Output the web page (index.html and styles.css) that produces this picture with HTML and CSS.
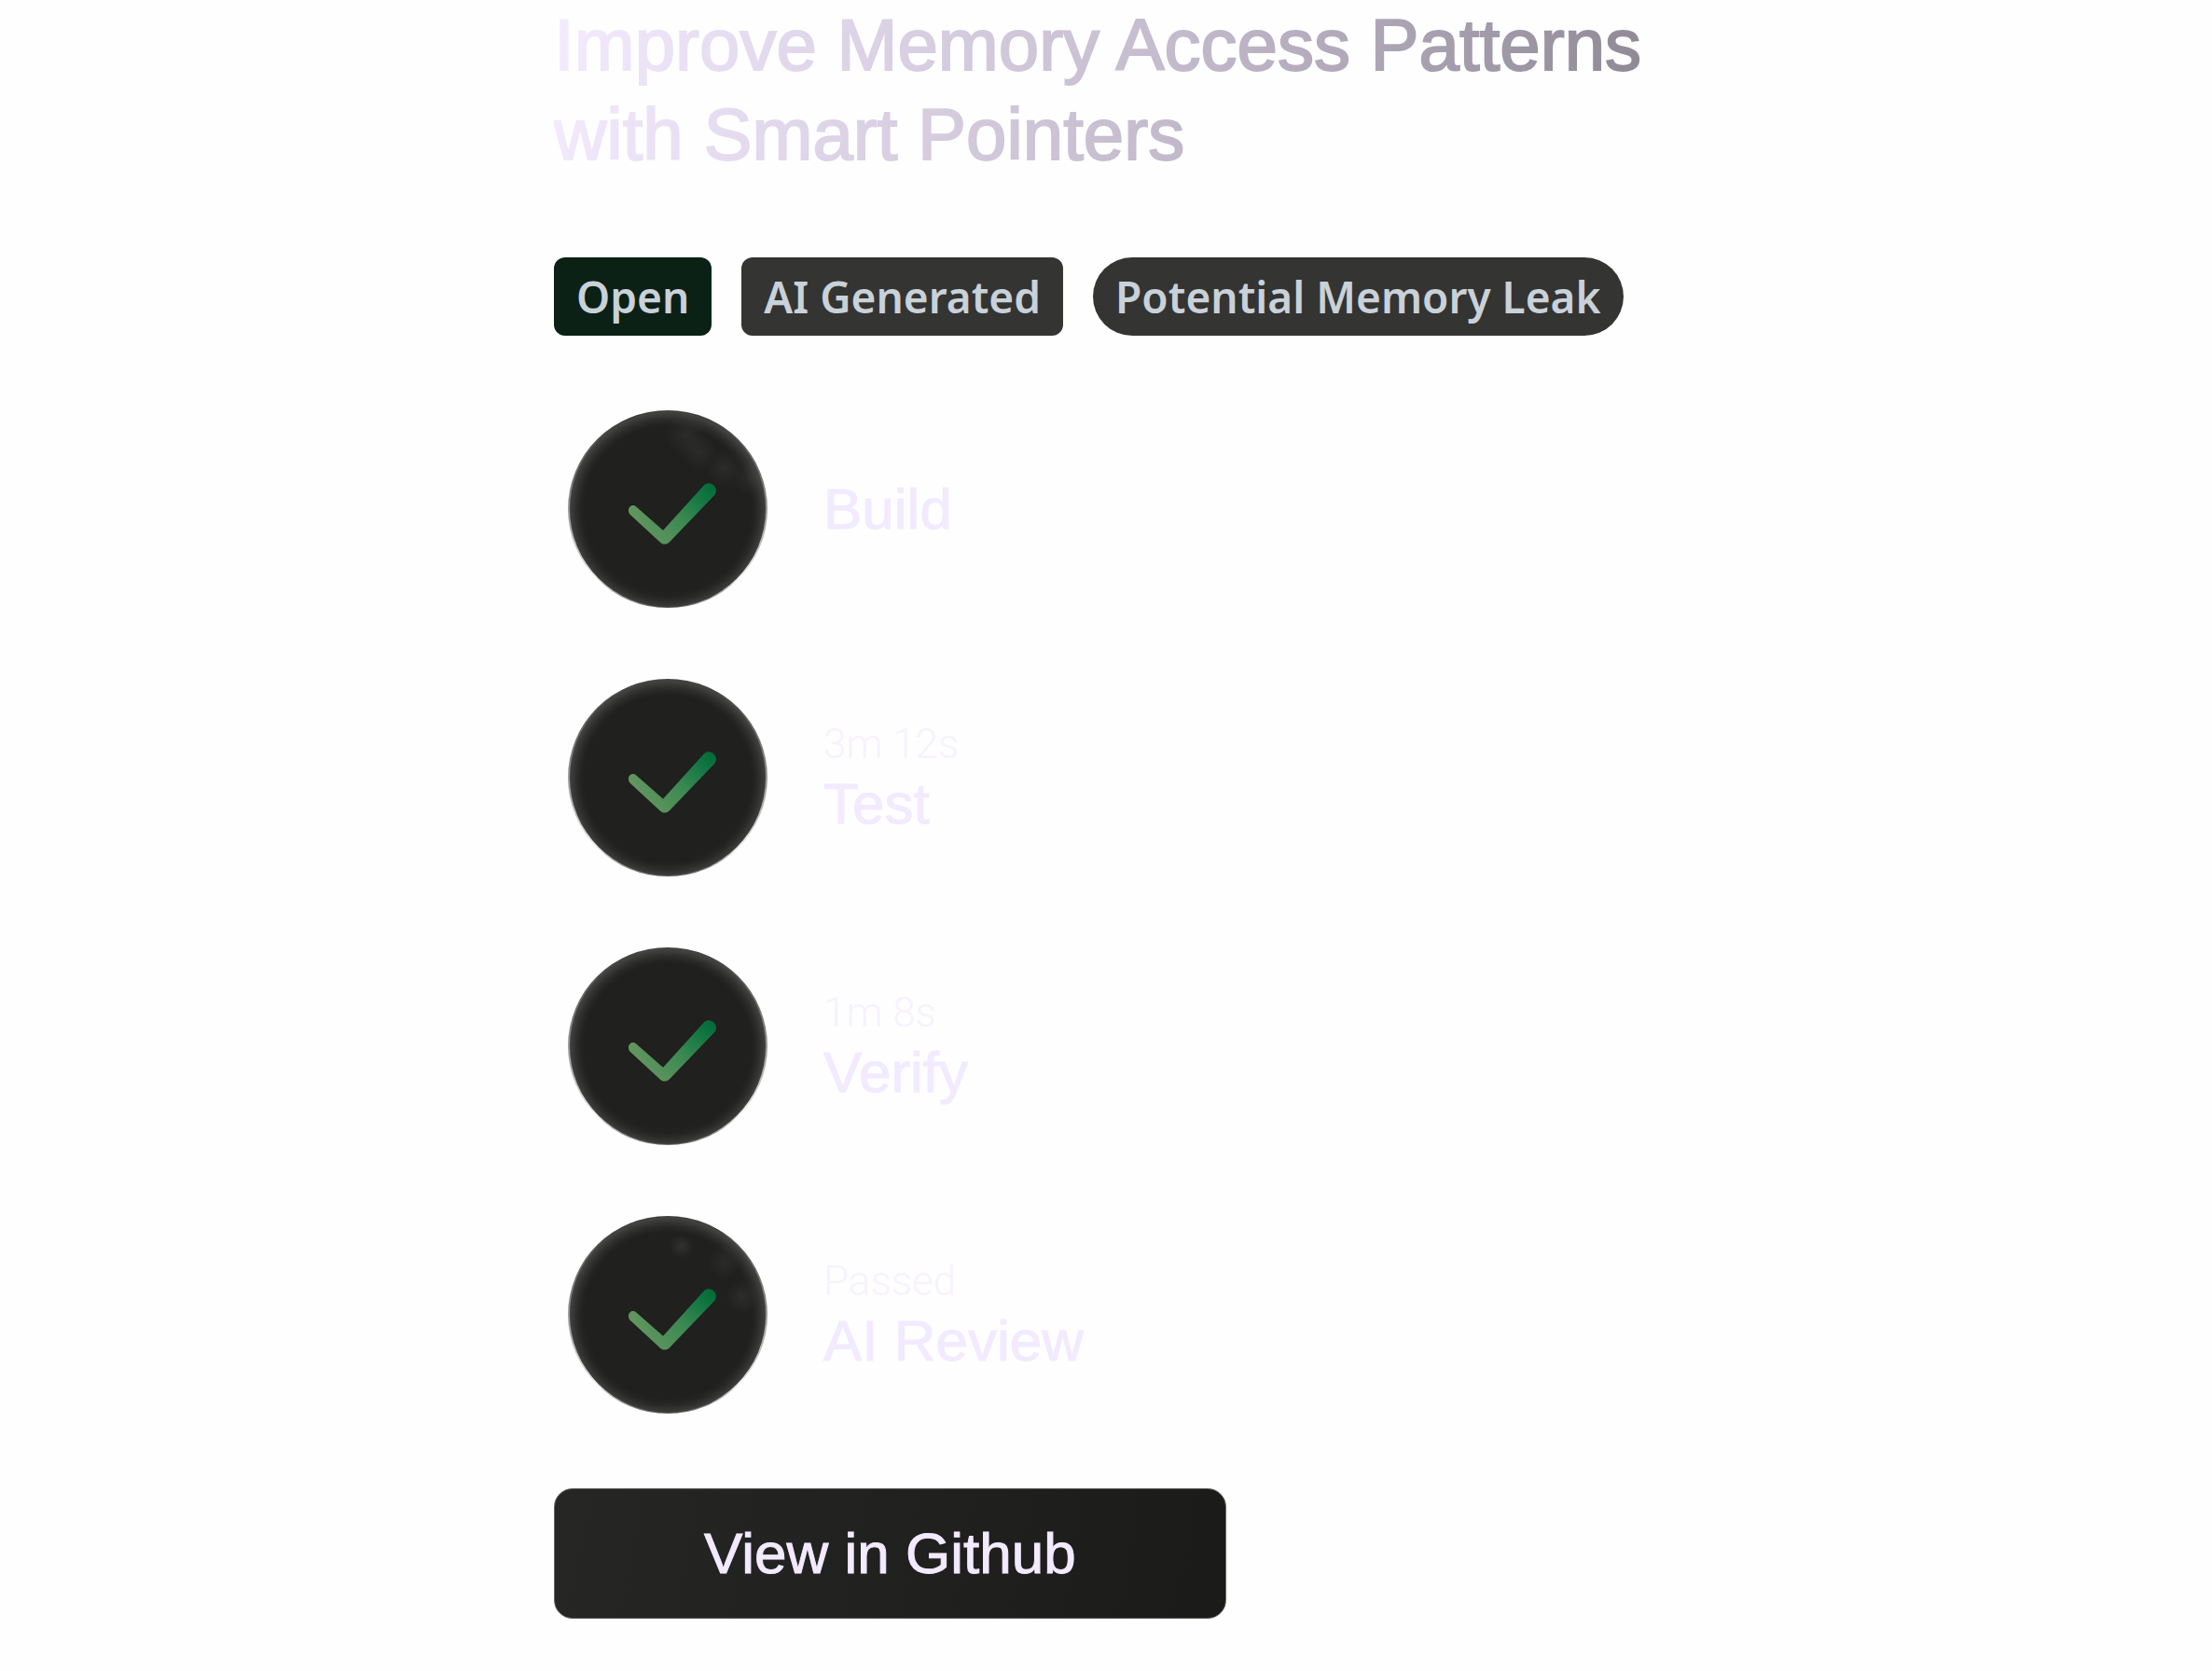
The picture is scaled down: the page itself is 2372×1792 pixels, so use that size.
FILE: index.html
```html
<!DOCTYPE html>
<html lang="en">
<head>
  <meta charset="UTF-8" />
  <meta name="viewport" content="width=device-width, initial-scale=1">
  <title>Improve Memory Access Patterns</title>
  <link rel="stylesheet" href="styles.css">
</head>
<body>
  <!-- shared check mark -->
  <svg class="defs" width="0" height="0" aria-hidden="true">
    <defs>
      <radialGradient id="check-fill" gradientUnits="userSpaceOnUse" cx="156" cy="80" r="92">
        <stop offset="0" stop-color="#006a38" />
        <stop offset="0.2" stop-color="#127642" />
        <stop offset="0.55" stop-color="#3c8952" />
        <stop offset="1" stop-color="#61955f" />
      </radialGradient>
      <symbol id="check" viewBox="0 0 212 212">
        <path fill="url(#check-fill)" d="M72 103.500 L101 129 L144.500 81 C147 77.500 151.500 77 155 79.500 L156.500 81 C159 83.500 159 88 156.500 91 L108 141.500 C105 144.700 101 144.700 98 142 L65.500 112 C60.500 107 66 98.500 72 103.500 Z" />
      </symbol>
    </defs>
  </svg>

  <main class="pull-request">
    <h1>Improve Memory Access Patterns with Smart Pointers</h1>

    <div class="badges">
      <span class="badge open">Open</span>
      <span class="badge">AI Generated</span>
      <span class="badge label">Potential Memory Leak</span>
    </div>

    <ul class="checks">
      <li class="check">
        <div class="status smoke-swirl"><svg><use href="#check" /></svg></div>
        <div class="check-info">
          <h2>Build</h2>
        </div>
      </li>
      <li class="check">
        <div class="status"><svg><use href="#check" /></svg></div>
        <div class="check-info">
          <p>3m 12s</p>
          <h2>Test</h2>
        </div>
      </li>
      <li class="check">
        <div class="status"><svg><use href="#check" /></svg></div>
        <div class="check-info">
          <p>1m 8s</p>
          <h2>Verify</h2>
        </div>
      </li>
      <li class="check">
        <div class="status smoke-spots"><svg><use href="#check" /></svg></div>
        <div class="check-info">
          <p>Passed</p>
          <h2>AI Review</h2>
        </div>
      </li>
    </ul>

    <a class="github-link" href="#">View in Github</a>
  </main>
</body>
</html>
```

FILE: styles.css
```css
:root {
  --text: #f2eaff;
  --text-faint: #f7f2ff;
  --badge-text: #c9d1d9;
  --badge-bg: #343432;
  --open-bg: #0b2116;
  --dark: #20201e;
}

* {
  box-sizing: border-box;
}

body {
  margin: 0;
  font-family: 'Liberation Sans', Arial, sans-serif;
  background: #fefefe;
  color: var(--text);
}

.defs {
  position: absolute;
}

.pull-request {
  max-width: 1184px;
  margin: 0 auto;
  display: flex;
  flex-direction: column;
  gap: 80px;
}

h1 {
  margin: 0 0 4px;
  font-size: 78px;
  line-height: 96px;
  font-weight: 400;
  color: transparent;
  background: linear-gradient(100deg, #f4ebff 0%, #c4bbcd 55%, #8c8692 100%);
  -webkit-background-clip: text;
  background-clip: text;
  -webkit-text-stroke: 2px transparent;
}

.badges {
  display: flex;
  flex-wrap: wrap;
  gap: 32px;
}

.badge {
  padding: 0 24px;
  border-radius: 12px;
  background: var(--badge-bg);
  color: var(--badge-text);
  font-family: 'Noto Sans', sans-serif;
  font-size: 46px;
  line-height: 84px;
  font-weight: 600;
}

.badge.open {
  background: var(--open-bg);
}

.badge.label {
  border-radius: 42px;
}

.checks {
  list-style: none;
  margin: 0;
  padding: 0 0 0 15px;
  display: flex;
  flex-direction: column;
  gap: 76px;
}

.check {
  display: flex;
  align-items: center;
  gap: 60px;
}

.status {
  flex: none;
  display: flex;
  width: 214px;
  height: 212px;
  padding: 1px 2px;
  border-radius: 50%;
  background: linear-gradient(#444442 5%, #969696 50%, #e8e8e8 85%, #6a6a6a 100%);
}

.status svg {
  width: 100%;
  height: 100%;
  border-radius: 50%;
  background-color: var(--dark);
  box-shadow: inset 0 3px 16px rgba(255, 255, 255, 0.14), inset 0 0 18px rgba(255, 255, 255, 0.18);
}

.smoke-swirl svg {
  background-image:
    radial-gradient(circle at 59% 12%, rgba(255, 255, 255, 0.05), transparent 10%),
    radial-gradient(circle at 66% 21%, rgba(255, 255, 255, 0.05), transparent 9%),
    radial-gradient(circle at 79% 29%, rgba(255, 255, 255, 0.05), transparent 9%),
    radial-gradient(circle at 92% 34%, rgba(255, 255, 255, 0.05), transparent 8%);
}

.smoke-spots svg {
  background-image:
    radial-gradient(circle at 57% 15%, rgba(255, 255, 255, 0.08), transparent 6%),
    radial-gradient(circle at 79% 23%, rgba(255, 255, 255, 0.05), transparent 8%),
    radial-gradient(circle at 88% 41%, rgba(255, 255, 255, 0.06), transparent 8%);
}

.check-info p {
  margin: 0;
  font-family: Roboto, sans-serif;
  font-size: 44px;
  line-height: 56px;
  font-weight: 300;
  color: var(--text-faint);
}

.check-info h2 {
  margin: 0;
  font-size: 62px;
  line-height: 72px;
  font-weight: 400;
  -webkit-text-stroke: 1px var(--text);
}

.github-link {
  align-self: flex-start;
  padding: 0 160px;
  border: 1px solid #666664;
  border-radius: 20px;
  background: linear-gradient(100deg, #262624, #1b1b19);
  color: var(--text);
  font-size: 62px;
  line-height: 138px;
  text-decoration: none;
  -webkit-text-stroke: 1px var(--text);
}
```
